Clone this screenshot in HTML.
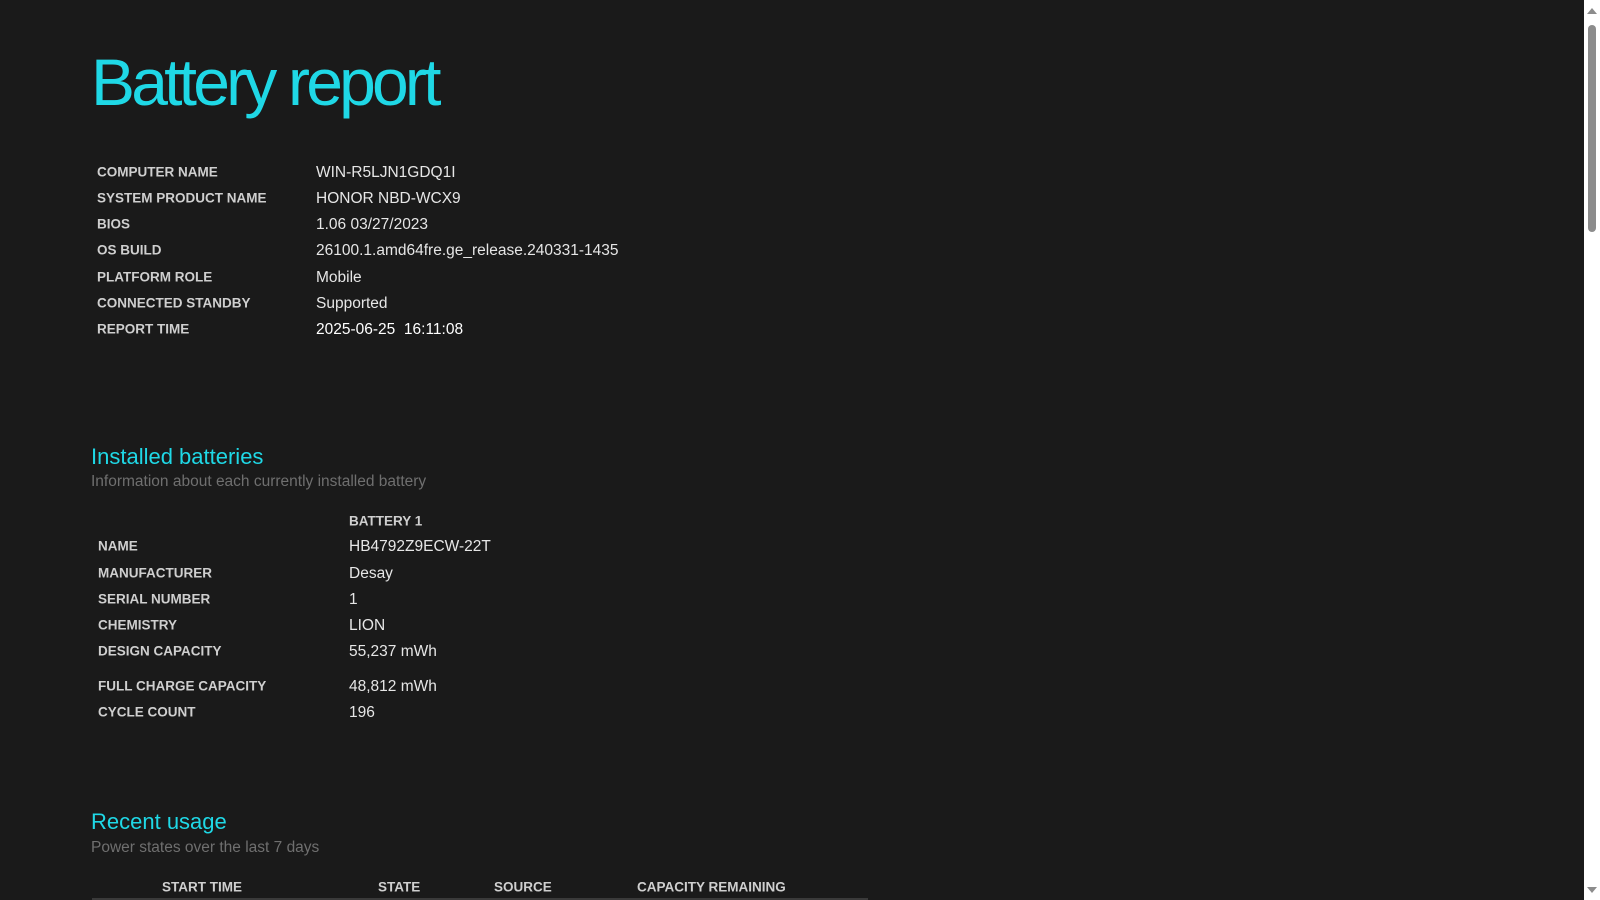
<!DOCTYPE html>
<html><head><meta charset="utf-8"><style>
html,body{margin:0;padding:0;background:#1a1a1a;width:1600px;height:900px;overflow:hidden;font-family:"Liberation Sans",sans-serif;}
.a{position:absolute;white-space:nowrap;}
.t{left:91px;top:44px;font-size:66px;letter-spacing:-3.8px;color:#1fd8e6;}
.l{font-size:13.5px;font-weight:bold;color:#cfcfcf;transform:translateY(-50%);}
.v{font-size:15.5px;color:#e6e6e6;transform:translateY(-50%);margin-top:1px;}
.h{font-size:22px;color:#1fd8e6;transform:translateY(-50%);}
.s{font-size:15.5px;color:#6f6f6f;transform:translateY(-50%);}
.sb{position:absolute;left:1584px;top:0;width:16px;height:900px;background:#fff;}
.th{position:absolute;left:1588px;top:25px;width:8px;height:207px;background:#8c8c8c;border-radius:4px;}
</style></head><body>
<div class="a t">Battery report</div>
<div class="a l" style="left:97px;top:172px">COMPUTER NAME</div><div class="a v" style="left:316px;top:172px">WIN-R5LJN1GDQ1I</div>
<div class="a l" style="left:97px;top:198px">SYSTEM PRODUCT NAME</div><div class="a v" style="left:316px;top:198px">HONOR NBD-WCX9</div>
<div class="a l" style="left:97px;top:224px">BIOS</div><div class="a v" style="left:316px;top:224px">1.06 03/27/2023</div>
<div class="a l" style="left:97px;top:250px">OS BUILD</div><div class="a v" style="left:316px;top:250px">26100.1.amd64fre.ge_release.240331-1435</div>
<div class="a l" style="left:97px;top:277px">PLATFORM ROLE</div><div class="a v" style="left:316px;top:277px">Mobile</div>
<div class="a l" style="left:97px;top:303px">CONNECTED STANDBY</div><div class="a v" style="left:316px;top:303px">Supported</div>
<div class="a l" style="left:97px;top:329px">REPORT TIME</div><div class="a v" style="left:316px;top:329px;color:#fff">2025-06-25 &nbsp;16:11:08</div>

<div class="a h" style="left:91px;top:457px">Installed batteries</div>
<div class="a s" style="left:91px;top:482px">Information about each currently installed battery</div>
<div class="a l" style="left:349px;top:521px">BATTERY 1</div>
<div class="a l" style="left:98px;top:546px">NAME</div><div class="a v" style="left:349px;top:546px">HB4792Z9ECW-22T</div>
<div class="a l" style="left:98px;top:573px">MANUFACTURER</div><div class="a v" style="left:349px;top:573px">Desay</div>
<div class="a l" style="left:98px;top:599px">SERIAL NUMBER</div><div class="a v" style="left:349px;top:599px">1</div>
<div class="a l" style="left:98px;top:625px">CHEMISTRY</div><div class="a v" style="left:349px;top:625px">LION</div>
<div class="a l" style="left:98px;top:651px">DESIGN CAPACITY</div><div class="a v" style="left:349px;top:651px">55,237 mWh</div>
<div class="a l" style="left:98px;top:686px">FULL CHARGE CAPACITY</div><div class="a v" style="left:349px;top:686px">48,812 mWh</div>
<div class="a l" style="left:98px;top:712px">CYCLE COUNT</div><div class="a v" style="left:349px;top:712px">196</div>

<div class="a h" style="left:91px;top:822px">Recent usage</div>
<div class="a s" style="left:91px;top:848px">Power states over the last 7 days</div>
<div class="a l" style="left:162px;top:887px">START TIME</div>
<div class="a l" style="left:378px;top:887px">STATE</div>
<div class="a l" style="left:494px;top:887px">SOURCE</div>
<div class="a l" style="left:637px;top:887px">CAPACITY REMAINING</div>
<div class="a" style="left:92px;top:898px;width:776px;height:2px;background:#3a3a3a"></div>
<div class="sb"></div><div class="th"></div>
<div class="a" style="left:1587px;top:8px;width:0;height:0;border-left:5px solid transparent;border-right:5px solid transparent;border-bottom:6px solid #8c8c8c"></div>
<div class="a" style="left:1587px;top:887px;width:0;height:0;border-left:5px solid transparent;border-right:5px solid transparent;border-top:6px solid #8c8c8c"></div>
</body></html>
